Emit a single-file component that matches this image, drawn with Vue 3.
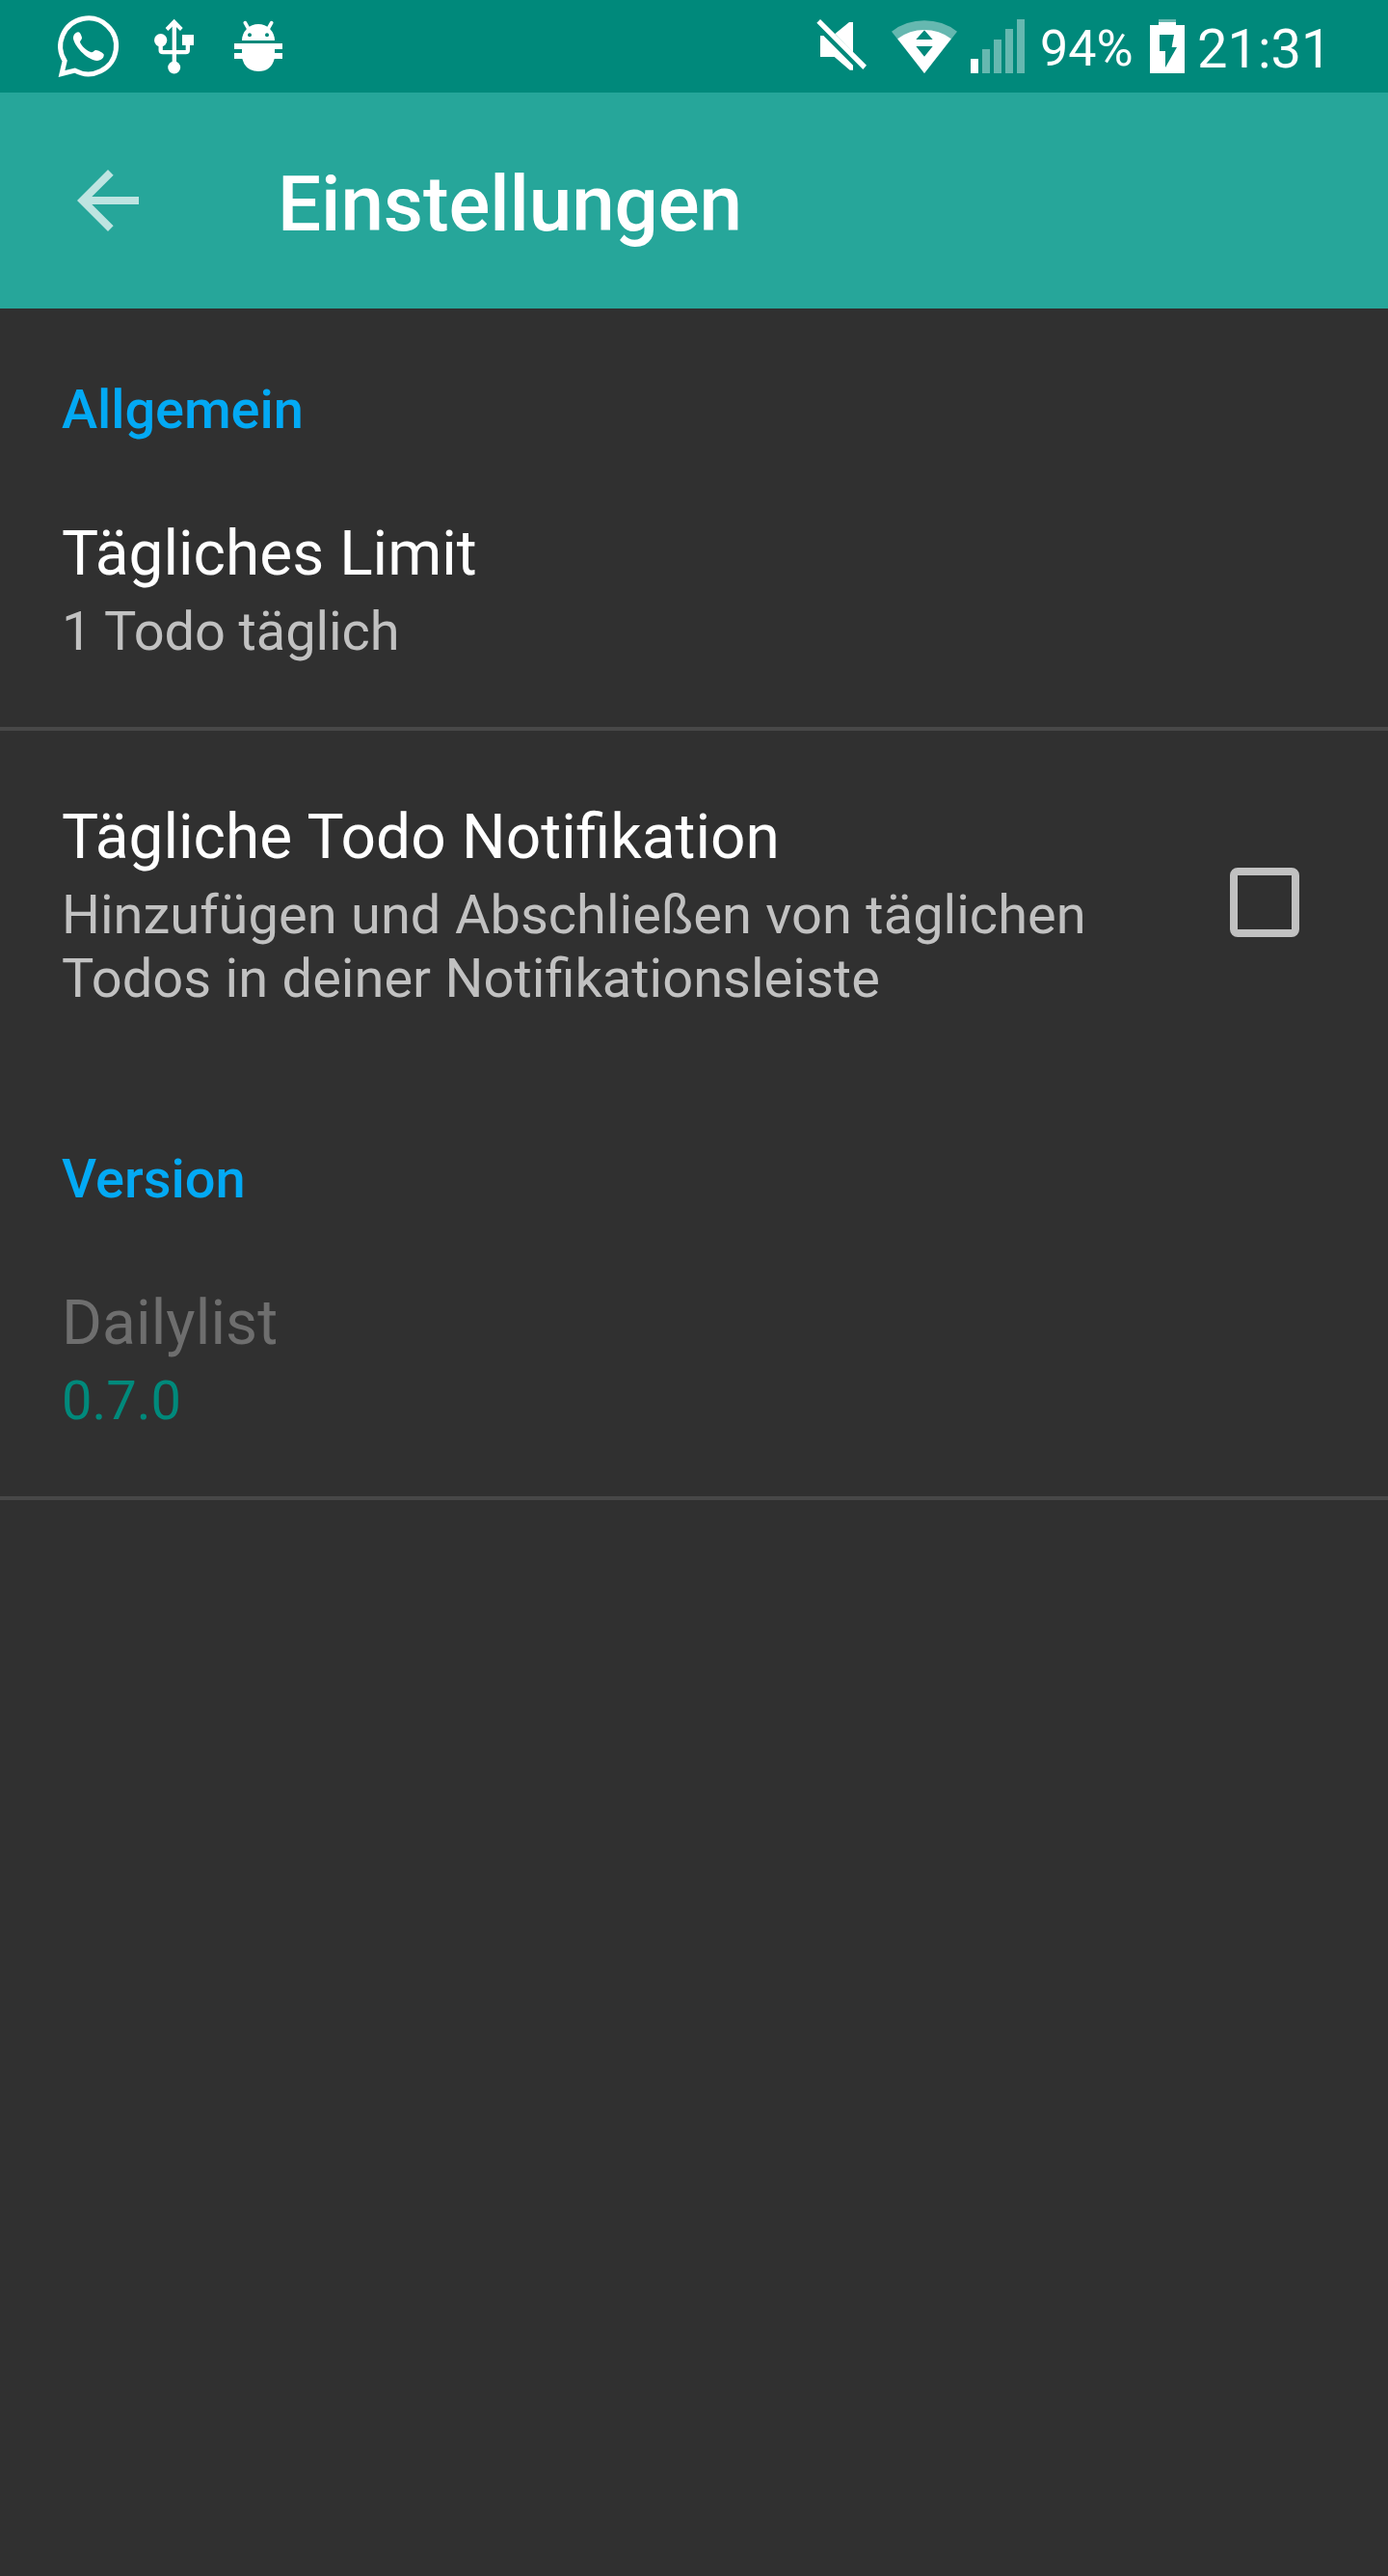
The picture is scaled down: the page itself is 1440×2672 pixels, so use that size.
<script setup>
import { ref } from 'vue'

const dailyNotification = ref(false)
const signalBars = [
  { x: 531, y: 183, active: true },
  { x: 567, y: 153, active: false },
  { x: 603, y: 123, active: false },
  { x: 639, y: 90, active: false },
  { x: 675, y: 60, active: false },
]
</script>

<template>
  <div class="screen">
    <div class="status-bar">
      <svg class="icon whatsapp" width="72" height="96" viewBox="48 0 216 288">
        <path d="M81.500 189.500A86.700 86.700 0 1 1 113 219.300L72 229.500Z" fill="none" stroke="#fff" stroke-width="15" stroke-miterlimit="10" />
        <path d="M123 100C129 99 132 107 135 117C136 123 129 126 129 131C132 141 150 158 164 163C169 164 173 156 179 156C187 157 200 164 203 169C205 180 195 188 182 189C155 188 115 150 108 121C107 110 114 101 123 100Z" fill="#fff" />
      </svg>
      <svg class="icon usb" width="48" height="96" viewBox="351 0 144 288">
        <path d="M422.500 66V205M380 138V156Q380 162.500 387 162.500H458Q464.500 162.500 464.500 156V138" fill="none" stroke="#fff" stroke-width="13" />
        <path d="M422 59L449 87L441 96L422 77L403 96L395 87ZM447 108H483V141H447Z" fill="#fff" />
        <circle cx="380" cy="125" r="20" fill="#fff" />
        <circle cx="422" cy="210" r="19.500" fill="#fff" />
      </svg>
      <svg class="icon debug" width="56" height="96" viewBox="600 0 168 288">
        <path d="M643 71L653 89M725 71L715 89" stroke="#fff" stroke-width="11" stroke-linecap="round" />
        <path d="M633 126A51 51 0 0 1 735 126ZM609 135H759V153H735V165H759V183H734Q724 222 684 222Q644 222 634 183H609V165H633V153H609Z" fill="#fff" />
        <circle cx="657" cy="109" r="6" fill="#00897b" />
        <circle cx="711" cy="109" r="6" fill="#00897b" />
      </svg>
      <div class="status-right">
        <svg class="icon" width="60" height="96" viewBox="42 0 180 288">
          <path d="M63 60L207 203L196 216L52 71ZM153 69H165V161L109 105ZM63 111H73L165 203V218H155L107 177H63Z" fill="#fff" />
        </svg>
        <svg class="icon wifi" width="72" height="96" viewBox="279 0 216 288">
          <path d="M387 228L285 98A168 168 0 0 1 489 98Z" fill="#66b8b0" />
          <path d="M387 228L303.500 121A138 138 0 0 1 470.500 121Z" fill="#fff" />
          <path d="M387 94L413 123H361ZM361 144H413L387 176Z" fill="#00897b" />
        </svg>
        <svg class="icon signal" width="60" height="96" viewBox="525 0 180 288">
          <rect v-for="bar in signalBars" :key="bar.x" :x="bar.x" :y="bar.y" width="24" :height="228 - bar.y" :fill="bar.active ? '#fff' : '#66b8b0'" />
        </svg>
        <span class="battery-level">94%</span>
        <svg class="icon battery" width="36" height="96" viewBox="399 0 108 288">
          <path d="M426 60H480V69H426Z" fill="#66b8b0" />
          <path d="M426 69H480V78H507V228H399V78H426Z" fill="#fff" />
          <path d="M429 108H474L467 147H483L447 210V159H429Z" fill="#00897b" />
        </svg>
        <span class="clock">21:31</span>
      </div>
    </div>

    <header class="app-bar">
      <svg class="back" width="96" height="96" viewBox="0 0 24 24">
        <path d="M20 11H7.830l5.590-5.590L12 4l-8 8 8 8 1.410-1.410L7.830 13H20v-2z" fill="#bee4e1" />
      </svg>
      <h1>Einstellungen</h1>
    </header>

    <main>
      <section class="general">
        <h2>Allgemein</h2>
        <div class="row divided">
          <div class="label">Tägliches Limit</div>
          <div class="summary limit">1 Todo täglich</div>
        </div>
        <div class="row toggle" @click="dailyNotification = !dailyNotification">
          <div class="texts">
            <div class="label">Tägliche Todo Notifikation</div>
            <div class="summary">Hinzufügen und Abschließen von täglichen<br />Todos in deiner Notifikationsleiste</div>
          </div>
          <span class="checkbox" :class="{ checked: dailyNotification }"></span>
        </div>
      </section>
      <section class="version">
        <h2>Version</h2>
        <div class="row divided">
          <div class="label disabled">Dailylist</div>
          <div class="summary number">0.7.0</div>
        </div>
      </section>
    </main>
  </div>
</template>

<style>
body {
  margin: 0;
  background: #303030;
}
</style>

<style scoped>
.screen {
  width: 1440px;
  height: 2672px;
  overflow: hidden;
  background: #303030;
  color: #fff;
  font-family: Roboto, sans-serif;
}
.icon,
.back {
  display: block;
  flex: none;
}
.status-bar {
  display: flex;
  height: 96px;
  padding-left: 56px;
  background: #00897b;
}
.usb {
  margin-left: 29px;
}
.debug {
  margin-left: 35px;
}
.status-right {
  display: flex;
  margin-left: auto;
  width: 596px;
}
.wifi {
  margin-left: 19px;
}
.signal {
  margin-left: 10px;
}
.battery-level {
  flex: none;
  width: 128px;
  padding: 20px 0 0 14px;
  box-sizing: border-box;
  font-size: 52px;
  line-height: 61px;
}
.clock {
  margin-left: 13px;
  padding-top: 18px;
  font-size: 56px;
  line-height: 66px;
}
.app-bar {
  display: flex;
  height: 224px;
  padding-left: 64px;
  box-sizing: border-box;
  background: #26a69a;
}
.back {
  margin-top: 64px;
}
h1 {
  margin: 69px 0 0 128px;
  font-size: 80px;
  line-height: 94px;
  font-weight: 500;
  letter-spacing: -0.1px;
}
h2 {
  margin: 0 0 79px;
  padding: 0 64px;
  font-size: 56px;
  line-height: 66px;
  font-weight: 500;
  color: #03a9f4;
}
.general {
  padding-top: 72px;
}
.general h2 {
  letter-spacing: -0.1px;
}
.version {
  padding-top: 142px;
}
.row {
  padding: 0 64px;
}
.divided {
  padding-bottom: 66px;
  border-bottom: 4px solid #484848;
}
.label {
  font-size: 64px;
  line-height: 75px;
  white-space: nowrap;
}
.summary {
  margin-top: 10px;
  font-size: 56px;
  line-height: 66px;
  color: #c1c1c1;
  white-space: nowrap;
}
.summary.limit {
  letter-spacing: -0.1px;
}
.toggle {
  display: flex;
  justify-content: space-between;
  padding: 73px 92px 0 64px;
  word-spacing: 0.6px;
}
.checkbox {
  width: 72px;
  height: 72px;
  margin-top: 69px;
  box-sizing: border-box;
  border: 8px solid #c1c1c1;
  border-radius: 8px;
}
.checkbox.checked {
  background: #c1c1c1;
}
.label.disabled {
  color: #6e6e6e;
  letter-spacing: 0.1px;
}
.summary.number {
  color: #00897b;
}
</style>
